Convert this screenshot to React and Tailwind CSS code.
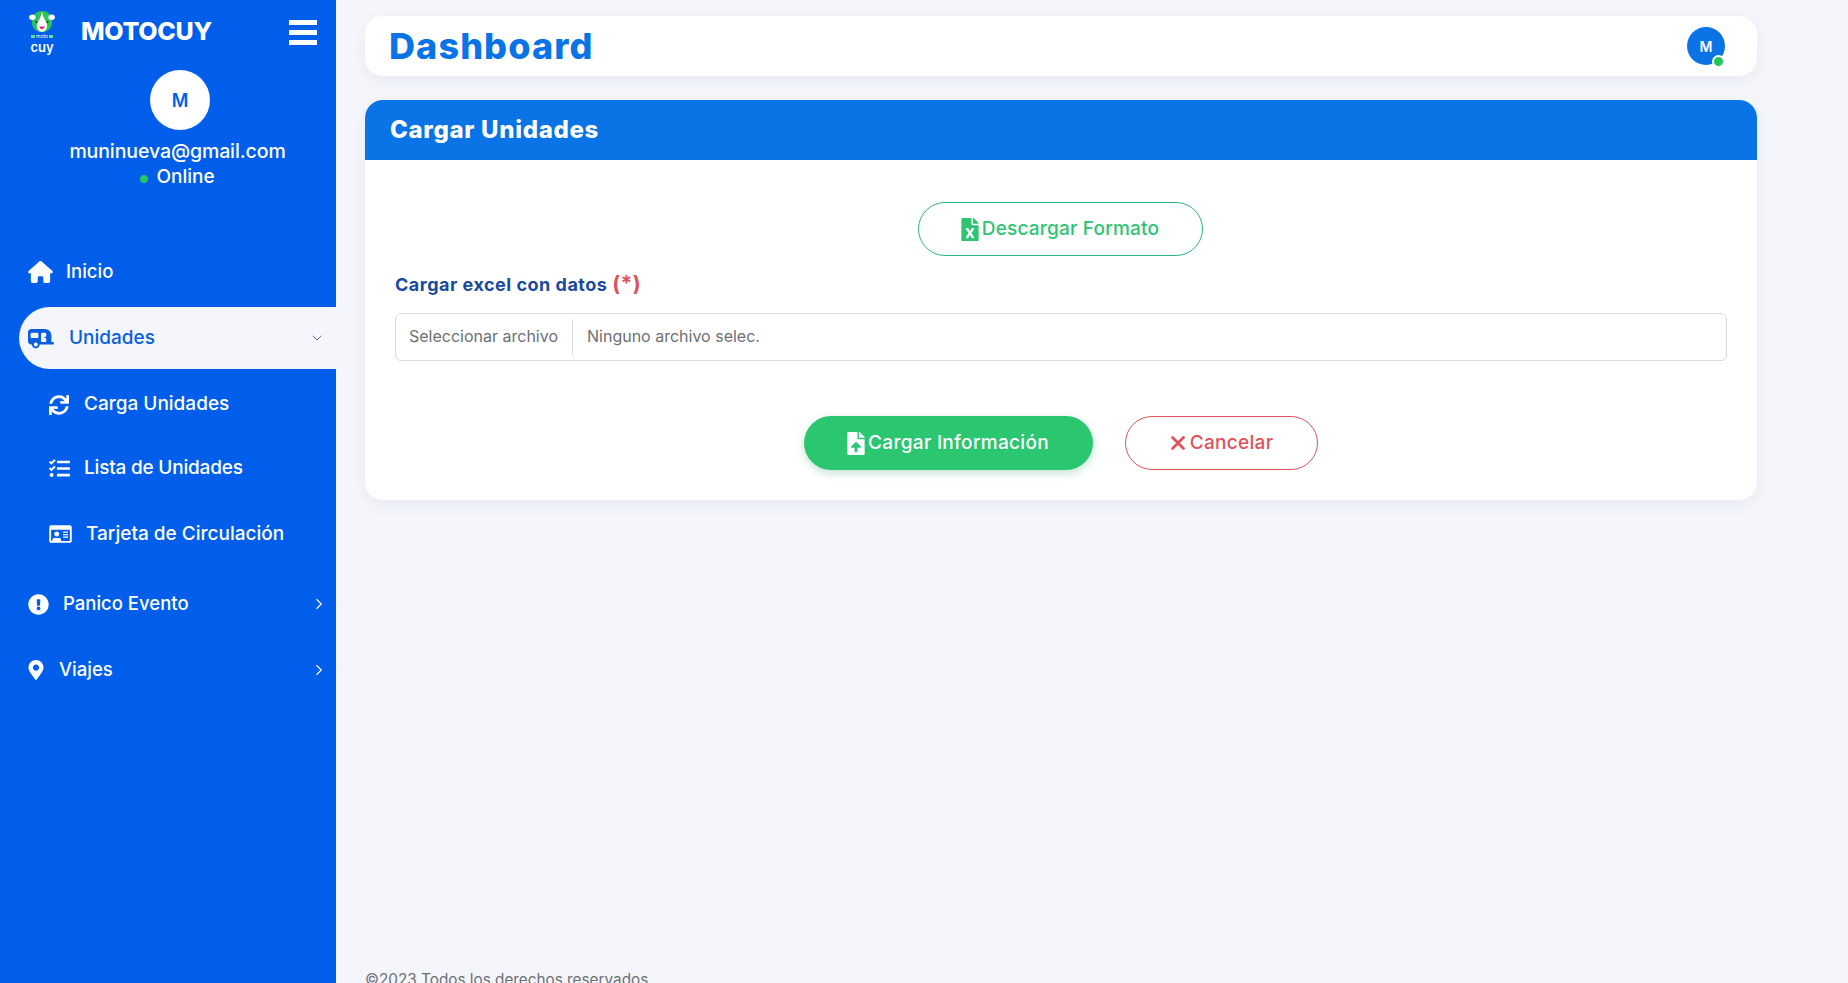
import React from 'react'
import { ChevronDown, ChevronRight } from 'lucide-react'
import {
  FaSync,
  FaTasks,
  FaRegIdCard,
  FaExclamationCircle,
  FaMapMarkerAlt,
  FaFileExcel,
  FaFileUpload
} from 'react-icons/fa'
import { FaCaravan, FaHouse, FaXmark } from 'react-icons/fa6'

const Logo = () => (
  <div className="flex flex-col items-center self-start mt-[10px] w-[30px]">
    <svg width="28" height="23" viewBox="0 0 28 25">
      <path d="M14 1 C21 1 25 6 25 13 C25 20 20 24 14 24 C8 24 3 20 3 13 C3 6 7 1 14 1Z" fill="#2fc25b" />
      <ellipse cx="3.5" cy="8" rx="3.5" ry="3" fill="#fff" />
      <ellipse cx="24.5" cy="8" rx="3.5" ry="3" fill="#fff" />
      <path d="M14 2 C13 7 12 9 10 12 C7 16 8 23 14 24 C20 23 21 16 18 12 C16 9 15 7 14 2Z" fill="#fff" />
      <path d="M11 18 C12 22 16 22 17 18Z" fill="#d8324c" />
      <circle cx="8" cy="13" r="1.1" fill="#1d2a22" />
      <circle cx="20" cy="13" r="1.1" fill="#1d2a22" />
    </svg>
    <div className="flex items-center gap-[1px] h-[6px]">
      <span className="w-[4px] h-[3px] bg-[#5fe08f]" />
      <span className="text-[5px] leading-[6px] text-white whitespace-nowrap">moto</span>
      <span className="w-[4px] h-[3px] bg-[#5fe08f]" />
    </div>
    <span className="text-[13px] leading-[16px] font-semibold text-white">cuy</span>
  </div>
)

const SubItem = ({ icon: Icon, label, iconClass, className }) => (
  <div className={`flex items-center pl-[49px] text-white text-[19px] font-medium ${className}`}>
    <Icon className={iconClass} />
    <span>{label}</span>
  </div>
)

const Sidebar = () => (
  <aside className="w-[336px] h-full shrink-0 bg-[#005eeb] text-white">
    <div className="flex items-center h-[64px] pl-[27px] pr-[19px]">
      <Logo />
      <span className="ml-[24px] text-[25px] font-extrabold tracking-[-0.3px]">MOTOCUY</span>
      <div className="ml-auto flex flex-col gap-[5px]">
        <div className="w-[28px] h-[5px] bg-white" />
        <div className="w-[28px] h-[5px] bg-white" />
        <div className="w-[28px] h-[5px] bg-white" />
      </div>
    </div>

    <div className="flex flex-col items-center mt-[6px] pl-[24px]">
      <div className="w-[60px] h-[60px] rounded-full bg-white flex items-center justify-center text-[#005eeb] text-[18px] font-semibold">
        M
      </div>
      <div className="mt-[8px] mr-[5px] text-[19.5px] leading-[26px] font-medium tracking-[-0.1px]">muninueva@gmail.com</div>
      <div className="flex items-center mr-[5px] text-[19px] leading-[26px] font-medium">
        <span className="w-[8px] h-[8px] rounded-full bg-[#22c55e] mr-[8px] mt-[3px]" />
        Online
      </div>
    </div>

    <nav className="mt-[51px]">
      <div className="flex items-center h-[62px] pl-[28px] text-[18.5px] font-medium">
        <FaHouse className="w-[25px] h-[22px] mr-[13px]" />
        Inicio
      </div>
      <div className="flex items-center h-[62px] ml-[19px] pl-[9px] pr-[11px] bg-[#f4f6fb] rounded-l-[31px] text-[#0a5fe0] text-[19px] font-medium mt-[4px]">
        <FaCaravan className="w-[26px] h-[22px] mr-[15px]" />
        Unidades
        <ChevronDown strokeWidth={1.5} className="ml-auto w-[16px] h-[16px] text-[#6a5fc0]" />
      </div>
      <SubItem icon={FaSync} label="Carga Unidades" iconClass="w-[20px] h-[20px] mr-[15px]" className="h-[63px] mt-[4px]" />
      <SubItem icon={FaTasks} label="Lista de Unidades" iconClass="w-[21px] h-[21px] mr-[14px]" className="h-[65px] tracking-[-0.2px]" />
      <SubItem icon={FaRegIdCard} label="Tarjeta de Circulación" iconClass="w-[23px] h-[20px] mr-[14px]" className="h-[66px]" />
      <div className="flex items-center h-[66px] pl-[28px] pr-[8px] text-[18.5px] font-medium mt-[4px]">
        <FaExclamationCircle className="w-[21px] h-[21px] mr-[14px]" />
        Panico Evento
        <ChevronRight strokeWidth={1.5} className="ml-auto w-[18px] h-[18px]" />
      </div>
      <div className="flex items-center h-[66px] pl-[28px] pr-[8px] text-[18.5px] font-medium">
        <FaMapMarkerAlt className="w-[16px] h-[20px] mr-[15px]" />
        Viajes
        <ChevronRight strokeWidth={1.5} className="ml-auto w-[18px] h-[18px]" />
      </div>
    </nav>
  </aside>
)

const App = () => (
  <div className="flex h-[983px] overflow-hidden bg-[#f4f6fb] font-['Inter','Noto_Sans',sans-serif]">
    <Sidebar />
    <main className="flex-1 flex flex-col pl-[29px] pr-[91px] pt-[16px]">
      <header className="shrink-0 flex items-center justify-between h-[60px] pl-[24px] pr-[32px] bg-white rounded-[18px] shadow-[0_4px_16px_rgba(30,50,90,0.06)]">
        <h1 className="text-[36px] font-extrabold text-[#0a74e6] tracking-[1.1px]">Dashboard</h1>
        <div className="relative w-[38px] h-[38px] rounded-full bg-[#0a74e6] flex items-center justify-center text-white text-[14px] font-semibold">
          M
          <span className="absolute right-[0px] bottom-[-3px] w-[13px] h-[13px] rounded-full bg-[#22c55e] border-[2px] border-white" />
        </div>
      </header>

      <section className="shrink-0 mt-[24px] bg-white rounded-[18px] shadow-[0_4px_16px_rgba(30,50,90,0.06)] overflow-hidden">
        <div className="flex items-center h-[60px] px-[25px] bg-[#0a74e6] text-white text-[24px] font-extrabold tracking-[0.7px]">
          Cargar Unidades
        </div>
        <div className="h-[340px] px-[30px] pt-[42px]">
          <div className="flex justify-center pr-[2px]">
            <button className="flex items-center justify-center w-[285px] h-[54px] rounded-full border border-[#2bb583] text-[#2ec472] text-[19px] font-medium tracking-[0.2px]">
              <FaFileExcel className="w-[18px] h-[23px] mr-[3px]" />
              Descargar Formato
            </button>
          </div>
          <div className="mt-[15px] text-[18px] leading-[26px] font-bold text-[#1a4a9f] tracking-[0.5px]">
            Cargar excel con datos <span className="text-[#e0515b] text-[21px]">(*)</span>
          </div>
          <div className="flex items-center h-[48px] mt-[15px] rounded-[6px] border border-[#d9dbdf] text-[16px] text-[#6c7075]">
            <span className="flex items-center h-[36px] pl-[13px] pr-[14px] pb-[2px] border-r border-[#d9dbdf]">Seleccionar archivo</span>
            <span className="pl-[14px] pb-[2px]">Ninguno archivo selec.</span>
          </div>
          <div className="flex justify-center gap-[32px] mt-[55px] pr-[1px]">
            <button className="flex items-center justify-center w-[289px] h-[54px] rounded-full bg-[#2ac670] text-white text-[19px] font-medium tracking-[0.3px] shadow-[0_3px_8px_rgba(40,160,100,0.3)]">
              <FaFileUpload className="w-[18px] h-[23px] mr-[3px]" />
              Cargar Información
            </button>
            <button className="flex items-center justify-center w-[193px] h-[54px] rounded-full border border-[#e0515b] text-[#e0515b] text-[19px] font-medium tracking-[0.3px]">
              <FaXmark className="w-[18px] h-[22px] mr-[3px]" />
              Cancelar
            </button>
          </div>
        </div>
      </section>

      <footer className="shrink-0 mt-[469px] text-[15.3px] text-[#6c7075]">©2023 Todos los derechos reservados</footer>
    </main>
  </div>
)

export default App
